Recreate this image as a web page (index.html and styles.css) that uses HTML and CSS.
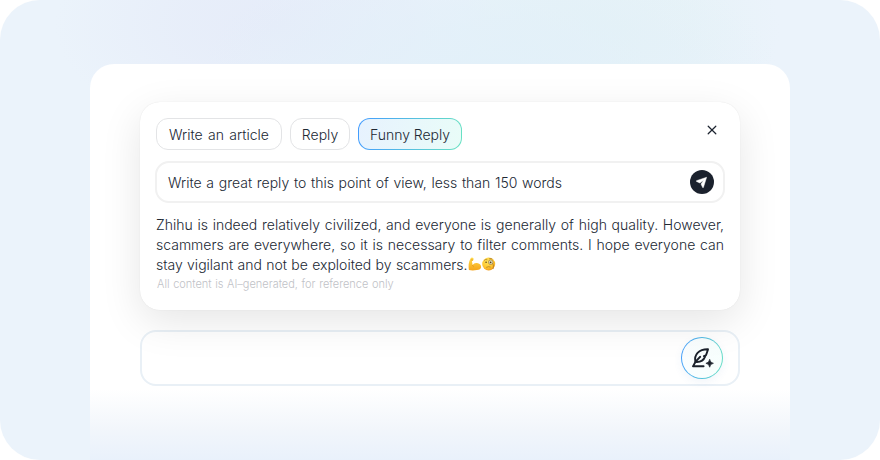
FILE: index.html
```html
<!DOCTYPE html>
<html lang="en">
<head>
<meta charset="utf-8">
<title>Writing assistant</title>
<link rel="stylesheet" href="styles.css">
</head>
<body>
<main class="scene">
  <section class="page">
    <article class="card">
      <header class="toolbar">
        <div class="tabs">
          <button class="tab tab-article"><span>Write an article</span></button>
          <button class="tab tab-reply"><span>Reply</span></button>
          <button class="tab tab-active"><span>Funny Reply</span></button>
        </div>
        <button class="close" aria-label="Close">
          <svg width="10" height="10" viewBox="0 0 10 10"><path d="M1.2 1.2l7.6 7.6M8.8 1.2L1.2 8.8" stroke="#1d2430" stroke-width="1.25" stroke-linecap="round"/></svg>
        </button>
      </header>
      <div class="prompt">
        <span class="prompt-text">Write a great reply to this point of view, less than 150 words</span>
        <button class="send" aria-label="Send">
          <svg width="24" height="24" viewBox="0 0 24 24"><path d="M16.6 7.3L6.5 10.7Q6.1 11 6.5 11.4L9.8 12.9L13.7 10.2L11 14L12.7 17.5Q13.1 18 13.4 17.4Z" fill="#fff" stroke="#fff" stroke-width=".5" stroke-linejoin="round"/></svg>
        </button>
      </div>
      <div class="answer">
        <p class="line l1">Zhihu is indeed relatively civilized, and everyone is generally of high quality. However,</p>
        <p class="line l2">scammers are everywhere, so it is necessary to filter comments. I hope everyone can</p>
        <p class="line l3"><span>stay vigilant and not be exploited by scammers.</span><svg class="emoji" width="28" height="14" viewBox="0 0 28 14">
          <defs>
            <linearGradient id="arm" x1="0" y1="0" x2="0" y2="1"><stop stop-color="#ffdc4b"/><stop offset="1" stop-color="#f5a51c"/></linearGradient>
            <radialGradient id="face" cx=".42" cy=".3" r=".75"><stop stop-color="#ffe65c"/><stop offset=".65" stop-color="#fdc52f"/><stop offset="1" stop-color="#ee941b"/></radialGradient>
          </defs>
          <path d="M2.7 1.2Q3.8-.2 5.1.9Q6.1 2 5.1 3.4Q4.2 4 3.9 4.1L4.6 8Q6.3 5.6 9 6.1Q12.8 6.6 13.1 9.9Q12.8 12.8 8.9 13Q4.6 13.8.9 13Q.1 8 1.4 4Z" fill="url(#arm)"/>
          <path d="M4.5 8Q4.8 9.3 5.8 9.9M2.9 2.8L5 3.1" fill="none" stroke="#dc881b" stroke-width=".6"/>
          <circle cx="20.7" cy="7" r="6.5" fill="url(#face)"/>
          <circle cx="22.7" cy="5.2" r="2.3" fill="#dce1bf" stroke="#a06d25" stroke-width=".6"/>
          <circle cx="18.1" cy="5.3" r=".8" fill="#5c3d19"/><circle cx="22.6" cy="5.3" r=".9" fill="#5c3d19"/>
          <path d="M16.4 3.2Q17.6 1.8 19.1 2.7M21.5 1.6Q23 1 24.2 1.9M18.6 10.2Q20.6 9.2 22.3 9.9M25 6.6Q26 9 25.2 11.7" fill="none" stroke="#99651f" stroke-width=".6" stroke-linecap="round"/>
        </svg></p>
        <p class="note"><span>All content is AI–generated, for reference only</span></p>
      </div>
    </article>
    <div class="field">
      <button class="write" aria-label="Write with AI">
        <svg width="42" height="42" viewBox="0 0 42 42">
          <g fill="none" stroke="#1b212b" stroke-width="1.9" stroke-linejoin="round" stroke-linecap="round">
            <path d="M14.4 24.7C13.6 21.3 14.3 18.3 16.6 15.8C19.2 13.2 22.5 12.2 27 12.3C26.2 14.4 26 16.4 24.8 18.4L22.9 19.1L24.1 19.7C22.8 23.1 20.2 25.1 15.6 25"/>
            <path d="M12 29.3C13.4 26 15.5 23 19.2 19.8M12 29.3H22.6"/>
          </g>
          <path d="M28.7 22.3Q29 25.8 32.4 26.3Q29 26.8 28.7 30.2Q28.2 26.8 24.9 26.3Q28.2 25.8 28.7 22.3Z" fill="#1b212b" stroke="#1b212b" stroke-width=".7" stroke-linejoin="round"/>
        </svg>
      </button>
    </div>
  </section>
</main>
</body>
</html>
```

FILE: styles.css
```css
* { box-sizing: border-box; }
body {
  margin: 0;
  background: #fff;
  color: #212833;
  font: 300 14px/20px Inter, "Noto Sans", sans-serif;
}
button { padding: 0; border: 0; background: none; font: inherit; color: inherit; }
p { margin: 0; }
svg { display: block; }
.scene {
  width: 880px;
  height: 460px;
  padding: 64px 90px 0;
  border-radius: 40px;
  overflow: hidden;
  background:
    radial-gradient(ellipse 290px 130px at 490px 75px, #e2f0f9 0%, #e2f0f9b0 40%, #e2f0f900 100%),
    radial-gradient(ellipse 220px 120px at 275px 25px, #e6ecf9 0%, #e6ecf9b0 45%, #e6ecf900 100%),
    radial-gradient(ellipse 180px 120px at 600px 30px, #e5f2f6 0%, #e5f2f6b0 50%, #e5f2f600 100%),
    #ebf3fb;
}
.page {
  height: 396px;
  padding: 38px 50px 0;
  border-radius: 24px 24px 0 0;
  background: linear-gradient(#fff 325px, #f2f6fb 365px, #e9f1fb 396px);
}
.card {
  position: relative;
  height: 208px;
  padding: 16px 16px 0;
  border-radius: 20px;
  background: #fff;
  box-shadow: 0 12px 40px rgba(0, 0, 0, .1), 0 0 1px rgba(0, 0, 0, .12);
}
.toolbar { display: flex; justify-content: space-between; height: 32px; }
.tabs { display: flex; gap: 8px; }
.tab {
  display: flex;
  align-items: center;
  justify-content: center;
  height: 32px;
  padding-top: 2px;
  border: 1px solid #e3e4e6;
  border-radius: 12px;
  white-space: nowrap;
}
.tab-article { width: 126px; word-spacing: 1.4px; }
.tab-reply { width: 60px; }
.tab-active {
  width: 104px;
  letter-spacing: -.05px;
  border-color: transparent;
  background: linear-gradient(100deg, #e7f2fe, #e9fcf8) padding-box, linear-gradient(100deg, #429bff, #69e2c2) border-box;
}
.close { align-self: flex-start; margin: 7px 7px 0 0; }
.prompt {
  display: flex;
  align-items: center;
  justify-content: space-between;
  height: 42px;
  margin: 11px -1px 0;
  padding: 0 9px 0 11px;
  border: 2px solid #f1f1f1;
  border-radius: 14px;
}
.prompt-text { padding-top: 2px; white-space: nowrap; word-spacing: .75px; }
.send { width: 24px; height: 24px; border-radius: 50%; background: #1b212d; }
.answer { margin-top: 12px; }
.line { height: 20px; white-space: nowrap; }
.l1, .l2 { text-align: justify; text-align-last: justify; }
.l3 { display: flex; word-spacing: .4px; }
.emoji { margin-top: 2px; }
.note { padding-left: 1px; font-size: 11px; line-height: 19px; word-spacing: .5px; color: #bfc2c7; white-space: nowrap; }
.field {
  display: flex;
  justify-content: flex-end;
  align-items: center;
  height: 56px;
  margin-top: 20px;
  padding-right: 15px;
  border: 2px solid #e9f0f6;
  border-radius: 16px;
}
.write {
  width: 42px;
  height: 42px;
  border-radius: 50%;
  border: 1px solid transparent;
  background: linear-gradient(110deg, #fafdff, #f7fffd) padding-box, linear-gradient(100deg, #429bff, #69e2c2) border-box;
  box-shadow: 0 3px 8px rgba(60, 110, 190, .07);
}
.write svg { margin: -1px; }
```
